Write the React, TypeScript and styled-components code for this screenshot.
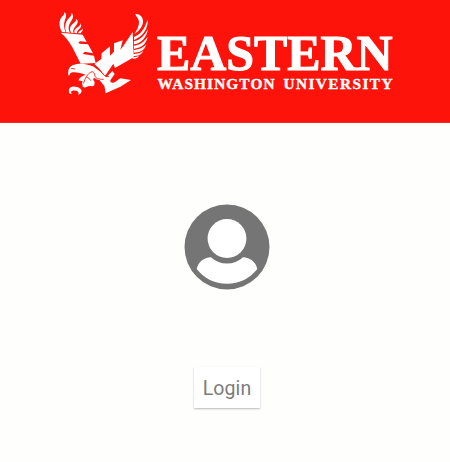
import React from "react";
import styled, { createGlobalStyle } from "styled-components";

const GlobalStyle = createGlobalStyle`
  * { box-sizing: border-box; }
  body { margin: 0; background: #fefefc; overflow: hidden; }
`;

const Page = styled.div`
  display: flex;
  flex-direction: column;
  height: 462px;
  background: #fefefc;
`;

const Header = styled.header`
  flex: none;
  height: 123px;
  background: #fe130b;
  border-bottom: 1px solid #ec2a20;
`;

const Logo = styled.svg`
  display: block;
  width: 450px;
  height: 122px;
`;

const Wordmark = styled.text`
  font-family: "Liberation Serif", serif;
  font-weight: 700;
  fill: #fff;
  stroke: #fff;
`;

const Content = styled.main`
  display: flex;
  flex-direction: column;
  align-items: center;
  padding: 81px 0 0 4px;
`;

const Avatar = styled.svg`
  display: block;
  width: 86px;
  height: 86px;
`;

const LoginButton = styled.button`
  width: 66px;
  height: 41px;
  margin-top: 77px;
  padding: 2px 0 0;
  border: 0;
  border-radius: 1px;
  background: #fff;
  box-shadow: 0 1px 2px rgba(0, 0, 0, 0.28);
  color: #7c7c7c;
  font: 400 19.5px/24px Roboto, sans-serif;
  letter-spacing: 0.1px;
`;

function Eagle() {
  return (
    <g transform="translate(50 0) scale(.33333)">
      <g fill="#fff">
        <path d="M36 96C27 81 25 62 37 49C43 43 44 39 42 36C51 41 49 51 45 59C40 72 42 84 47 97Z" />
        <path d="M49 97C42 81 47 63 57 54C64 47 66 42 63 38C73 44 69 56 63 64C56 75 53 87 60 98Z" />
        <path d="M63 98C57 87 61 76 71 69C77 64 80 60 78 56C87 62 82 72 77 78C70 86 68 92 71 99Z" />
        <path d="M74 99C71 90 77 86 84 81C90 77 92 74 91 70C97 78 91 84 87 88C81 93 80 97 82 100Z" />
        <path d="M85 100C84 94 91 93 98 86C100 94 92 96 92 100Z" />
        <path d="M32 98L98 104L110 126L92 124C84 125 84 130 90 131L114 133L129 160L108 156C98 156 98 162 103 163L132 167L137 189L92 191L67 142Q51 113 32 98Z" />
        <path d="M133 192L154 177L155 160L180 139L180 167L192 155L192 130L218 121L211 150L222 135L248 96L251 172L195 204L190 191L165 228Q150 207 133 192Z" />
        <path d="M167 234L187 213L194 222L181 241C180 247 184 249 190 248C198 247 203 239 211 235L243 240L211 260L167 280L163 258L149 241Z" />
        <path d="M256 41C270 43 278 49 279 62C280 75 271 90 253 102C262 88 268 75 267 65C266 54 258 51 256 41Z" />
        <path d="M252 111C274 103 285 84 293 58C295 83 281 109 252 120Z" />
        <path d="M252 124C274 118 285 104 294 86C290 110 277 129 252 133Z" />
        <path d="M252 137C273 133 282 125 293 110C289 132 274 144 252 146Z" />
        <path d="M251 150C269 148 280 143 289 132C284 152 269 158 251 158Z" />
        <path d="M250 162C263 161 272 159 280 153C275 164 264 168 249 168Z" />
        <path d="M247 172C256 170 263 170 267 167C264 174 257 177 248 176Z" />
        <path d="M55 215C54 205 64 194 81 192C101 189 119 195 129 199L152 215L170 233L160 242L142 239L132 233C126 241 134 240 134 250L121 258C119 249 110 244 105 251C102 256 105 259 107 261C97 259 94 250 98 244L85 241C89 233 96 227 107 224C96 220 82 218 73 217C63 215 60 219 57 228Q52 222 55 215Z" />
        <path d="M57 276C54 263 66 256 81 261C96 265 101 277 85 285C88 276 83 272 76 272C66 271 61 274 65 282C58 282 57 279 57 276Z" />
        <path d="M98 254L105 245Q111 241 117 247L130 246Q135 250 133 255Q130 260 122 258Q115 257 108 262Q96 264 98 254Z" />
      </g>
      <g fill="none" stroke="#fe130b" strokeWidth="2.6" strokeLinecap="round">
        <path d="M64 206Q69 204 74 207" />
        <path d="M101 249C105 233 114 221 123 216C131 213 134 220 135 228C137 235 145 238 160 238" />
        <path d="M110 232Q118 232 122 241" />
        <path d="M133 196C145 201 149 210 156 219Q162 230 176 230" />
      </g>
    </g>
  );
}

export default function App() {
  return (
    <>
      <GlobalStyle />
      <Page>
        <Header>
          <Logo viewBox="0 0 450 122" role="img" aria-label="Eastern Washington University">
            <Eagle />
            <Wordmark x="157" y="70" fontSize="50" strokeWidth="1.1" textLength="235.5" lengthAdjust="spacingAndGlyphs">EASTERN</Wordmark>
            <Wordmark x="157.5" y="89.3" fontSize="15.3" strokeWidth=".4" textLength="117" lengthAdjust="spacing">WASHINGTON</Wordmark>
            <Wordmark x="283.5" y="89.3" fontSize="15.3" strokeWidth=".4" textLength="109" lengthAdjust="spacing">UNIVERSITY</Wordmark>
          </Logo>
        </Header>
        <Content>
          <Avatar viewBox="0 0 86 86" aria-hidden="true">
            <circle cx="43" cy="43" r="42.5" fill="#757575" />
            <circle cx="43" cy="34.5" r="19.4" fill="#fff" />
            <path d="M27 53.2Q34 59.5 43 59.5Q52 59.5 59 53.2C66 53.4 72 58 73.3 65C66 74.5 55.5 79.8 43 79.8S20 74.5 12.7 65C14 58 20 53.4 27 53.2Z" fill="#fff" />
          </Avatar>
          <LoginButton type="button">Login</LoginButton>
        </Content>
      </Page>
    </>
  );
}
